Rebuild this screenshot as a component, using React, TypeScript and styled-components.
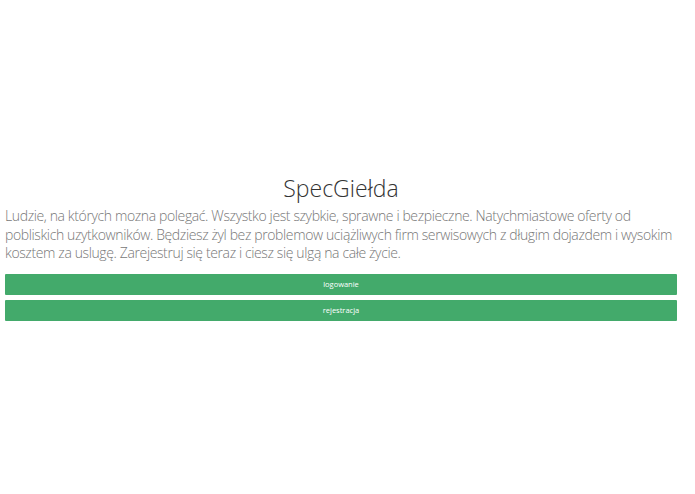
import React from "react";
import styled, { createGlobalStyle } from "styled-components";

const GlobalStyle = createGlobalStyle`
  html, body {
    margin: 0;
    padding: 0;
    background: #ffffff;
  }
  body {
    font-family: "Open Sans", "Liberation Sans", sans-serif;
  }
`;

const Page = styled.div`
  min-height: 100vh;
  display: flex;
  align-items: center;
  padding: 0 18px 0 5px;
  box-sizing: border-box;
`;

const Panel = styled.div`
  width: 100%;
  display: flex;
  flex-direction: column;
`;

const Title = styled.h1`
  margin: 0 0 4px;
  text-align: center;
  font-size: 23px;
  font-weight: 300;
  line-height: 30px;
  color: #333333;
`;

const Lead = styled.p`
  margin: 0 0 6px;
  font-size: 14px;
  font-weight: 300;
  line-height: 18.5px;
  letter-spacing: -0.38px;
  color: #777777;
`;

const ActionButton = styled.button`
  display: block;
  width: 100%;
  height: 21px;
  margin-top: 5px;
  border: none;
  border-radius: 1px;
  background: #43aa6b;
  color: #ffffff;
  font-family: "Open Sans", "Liberation Sans", sans-serif;
  font-size: 7.5px;
  font-weight: 400;
  cursor: pointer;
  &:hover {
    background: #3b9a60;
  }
`;

export default function App() {
  return (
    <>
      <GlobalStyle />
      <Page>
        <Panel>
          <Title>SpecGiełda</Title>
          <Lead>
            Ludzie, na których mozna polegać. Wszystko jest szybkie, sprawne i
            bezpieczne. Natychmiastowe oferty od pobliskich uzytkowników.
            Będziesz żyl bez problemow uciążliwych firm serwisowych z długim
            dojazdem i wysokim kosztem za uslugę. Zarejestruj się teraz i ciesz
            się ulgą na całe życie.
          </Lead>
          <ActionButton>logowanie</ActionButton>
          <ActionButton>rejestracja</ActionButton>
        </Panel>
      </Page>
    </>
  );
}
